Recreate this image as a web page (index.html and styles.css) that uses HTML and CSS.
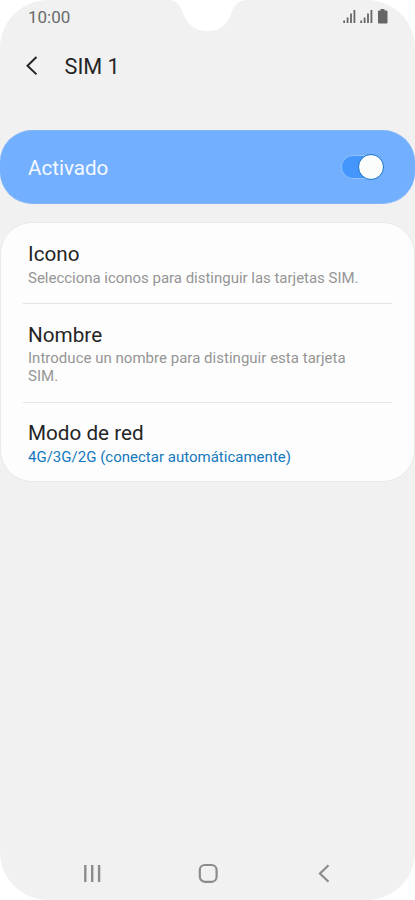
FILE: index.html
```html
<!DOCTYPE html>
<html lang="es">
<head>
    <meta charset="UTF-8">
    <meta name="viewport" content="width=device-width, initial-scale=1.0">
    <title>SIM 1</title>
    <link rel="stylesheet" href="styles.css">
</head>
<body>
    <div class="phone">
        <svg class="notch" width="80" height="32" viewBox="0 0 80 32">
            <path d="M0 0C8 0.5 11 5 14 13C18 25 27 31 38.500 31C50 31 57 26 62 14C65 6 68 0.500 78 0Z" fill="#fff"/>
        </svg>

        <div class="status-bar">
            <span class="clock">10:00</span>
            <svg class="status-icons" width="46" height="16" viewBox="0 0 46 16" fill="#666">
                <path d="M.3 11.500h1.800V14H.3zM3.700 8.500h1.800V14H3.700zM7.100 4.500h1.800V14H7.100zM10.500 1h1.800v13h-1.800z"/>
                <path d="M17.300 11.500h1.800V14h-1.800zM20.700 8.500h1.800V14h-1.800zM24.100 4.500h1.800V14h-1.800zM27.500 1h1.800v13h-1.800z"/>
                <path d="M37.500 0h4v1.500h2q1 0 1 1v11q0 1-1 1h-7.500q-1 0-1-1v-11q0-1 1-1h1.500z"/>
            </svg>
        </div>

        <div class="header">
            <svg class="back-icon" width="14" height="20" viewBox="0 0 14 20">
                <path d="M11.500 1L2.500 9.700L11.500 18.400" fill="none" stroke="#252525" stroke-width="2"/>
            </svg>
            <h1>SIM 1</h1>
        </div>

        <div class="switch-card">
            <span class="switch-label">Activado</span>
            <div class="toggle"><div class="toggle-knob"></div></div>
        </div>

        <div class="settings">
            <div class="item">
                <h2>Icono</h2>
                <p>Selecciona iconos para distinguir las tarjetas SIM.</p>
            </div>
            <div class="item">
                <h2>Nombre</h2>
                <p class="spaced">Introduce un nombre para distinguir esta tarjeta SIM.</p>
            </div>
            <div class="item">
                <h2>Modo de red</h2>
                <p class="value">4G/3G/2G (conectar automáticamente)</p>
            </div>
        </div>

        <div class="nav-bar">
            <svg width="20" height="20" viewBox="0 0 20 20" fill="none" stroke="#8c8c8c" stroke-width="2.400">
                <path d="M3.300 2v17M10.200 2v17M17.100 2v17"/>
            </svg>
            <svg width="20" height="20" viewBox="0 0 20 20" fill="none" stroke="#8c8c8c" stroke-width="2.200">
                <rect x="1.800" y="2" width="16.800" height="16.800" rx="5"/>
            </svg>
            <svg width="20" height="20" viewBox="0 0 20 20" fill="none" stroke="#8c8c8c" stroke-width="2.200">
                <path d="M14.500 2.300L6 10.500L14.500 18.700"/>
            </svg>
        </div>
    </div>
</body>
</html>
```

FILE: styles.css
```css
:root {
    --background-color: #f1f1f1;
    --card-color: #fdfdfd;
    --text-color: #252525;
    --muted-color: #959595;
    --value-color: #1478bd;
}

* {
    box-sizing: border-box;
    margin: 0;
    padding: 0;
}

body {
    font-family: Roboto, 'Liberation Sans', sans-serif;
    background: #fff;
    color: var(--text-color);
}

.phone {
    position: relative;
    display: flex;
    flex-direction: column;
    height: 900px;
    background: var(--background-color);
    border-radius: 48px;
    overflow: hidden;
}

.notch {
    position: absolute;
    top: 0;
    left: 169px;
}

.status-bar {
    display: flex;
    justify-content: space-between;
    align-items: center;
    height: 34px;
    padding: 0 26px 0 28px;
}

.clock {
    font-size: 17px;
    color: #6b6b6b;
}

.header {
    display: flex;
    align-items: center;
    height: 64px;
    padding-left: 25px;
    margin-bottom: 32px;
}

.header h1 {
    margin-left: 25.5px;
    font-size: 21.7px;
    font-weight: 400;
}

.switch-card {
    display: flex;
    justify-content: space-between;
    align-items: center;
    height: 74px;
    padding: 0 31px 0 28px;
    margin-bottom: 18px;
    background: #73afff;
    border: 1px solid #84b7f8;
    border-width: 1px 0;
    border-radius: 32px;
}

.switch-label {
    padding-top: 2px;
    font-size: 20.6px;
    color: #f4f9ff;
}

.toggle {
    display: flex;
    justify-content: flex-end;
    align-items: center;
    width: 43px;
    height: 24px;
    background: #4496fc;
    border: 1px solid #8ec3fb;
    border-radius: 12px;
}

.toggle-knob {
    flex: none;
    width: 26px;
    height: 26px;
    margin-right: -1px;
    background: #fbfdfd;
    border: 1px solid #1672c8;
    border-radius: 50%;
}

.settings {
    height: 260px;
    padding: 0 22px;
    background: var(--card-color);
    border: 1px solid #e9e9e9;
    border-radius: 32px;
}

.item {
    padding: 18px 25px 17px 5px;
}

.item:first-child {
    padding-bottom: 16px;
}

.item:first-child h2 {
    margin-bottom: 1px;
}

.item:last-child {
    padding-top: 17px;
}

.item:last-child h2 {
    margin-bottom: 1px;
}

.item + .item {
    border-top: 1px solid #e4e4e4;
}

.item h2 {
    font-size: 20.7px;
    font-weight: 400;
    line-height: 27px;
}

.item p {
    font-size: 15px;
    line-height: 18px;
    letter-spacing: -0.02px;
    color: var(--muted-color);
}

.item .spaced {
    letter-spacing: 0.02px;
}

.item .value {
    letter-spacing: 0.01px;
    color: var(--value-color);
}

.nav-bar {
    display: flex;
    justify-content: space-between;
    align-items: center;
    height: 54px;
    margin-top: auto;
    padding: 0 81px 0 82px;
}
```
